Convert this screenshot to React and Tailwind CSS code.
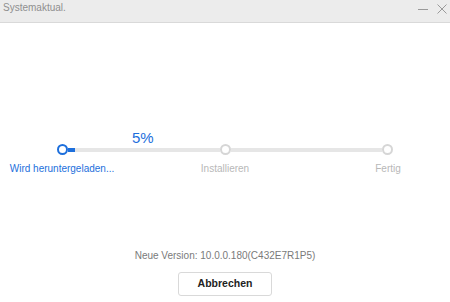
import React from "react";

const Node = ({ active }) => (
  <div
    className={`w-[11px] h-[11px] rounded-full border-[2px] bg-white shrink-0 ${
      active ? "border-[#1d6fdc]" : "border-[#d6d6d6]"
    }`}
  />
);

const App = () => {
  return (
    <div
      className="w-[450px] h-[302px] bg-white flex flex-col"
      style={{ fontFamily: '"Liberation Sans", Arial, sans-serif' }}
    >
      {/* title bar */}
      <div className="h-[23px] bg-[#ececec] border-b border-[#d9d9d9] flex items-start justify-between pl-[3px] pr-[3px]">
        <span className="mt-[3px] text-[10px] text-[#8f8f8f] leading-none">Systemaktual.</span>
        <div className="flex items-start gap-[9px] mt-[4px]">
          <svg width="10" height="10" viewBox="0 0 10 10">
            <path d="M0 5.5h10" stroke="#9a9a9a" strokeWidth="1" />
          </svg>
          <svg width="10" height="10" viewBox="0 0 10 10">
            <path d="M0.5 0.5l9 9M9.5 0.5l-9 9" stroke="#9a9a9a" strokeWidth="1" />
          </svg>
        </div>
      </div>

      {/* progress */}
      <div className="pt-[107px]">
        <div className="text-[15px] leading-none text-[#1d6fdc] pl-[132px] h-[14px]">5%</div>
        <div className="flex items-center mx-[57px]">
          <Node active />
          <div className="flex-1 h-[4px] bg-[#e6e6e6] flex">
            <div className="w-[7px] h-full bg-[#1d6fdc]" />
          </div>
          <Node />
          <div className="flex-1 h-[4px] bg-[#e6e6e6]" />
          <Node />
        </div>
        <div className="flex justify-between px-[2px] mt-[8px] text-[10px] leading-[12px]">
          <div className="w-[120px] text-center text-[#1d6fdc]">Wird heruntergeladen...</div>
          <div className="w-[120px] text-center text-[#b8b8b8]">Installieren</div>
          <div className="w-[120px] text-center text-[#b8b8b8]">Fertig</div>
        </div>
      </div>

      {/* footer */}
      <div className="mt-auto pb-[6px] flex flex-col items-center">
        <div className="text-[10px] text-[#7a7a7a] leading-[12px]">
          Neue Version: 10.0.0.180(C432E7R1P5)
        </div>
        <button className="mt-[10px] w-[94px] h-[24px] border border-[#d9d9d9] rounded-[3px] bg-white text-[10.5px] font-bold text-[#222]">
          Abbrechen
        </button>
      </div>
    </div>
  );
};

export default App;
